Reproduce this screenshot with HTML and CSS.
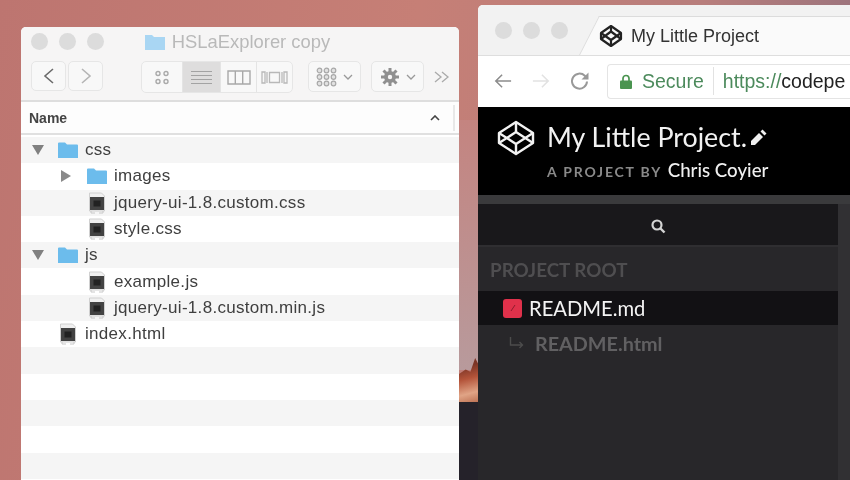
FILE: index.html
```html
<!doctype html>
<html>
<head>
    <meta charset="utf-8">
    <title>HSLaExplorer copy</title>
    <link rel="stylesheet" href="styles.css">
</head>

<body>
<svg class="defs" width="0" height="0">
    <symbol id="folder" viewBox="0 0 22 17"><path d="M1 1.500q0-1 1-1h6l2 2h10q1 0 1 1V16H1z" fill="#6cbcec"/></symbol>
    <symbol id="doc" viewBox="0 0 18 22">
        <path d="M1.500 1h12l3 3v15h-15z" fill="#f0f0f0" stroke="#d0d0d0"/>
        <rect x="2" y="5" width="14" height="13" fill="#434343"/>
        <rect x="5.500" y="8.500" width="7" height="6" fill="#222"/>
        <path d="M3 19v2h4M15 19v2h-4" fill="none" stroke="#c8c8c8"/>
    </symbol>
    <symbol id="open" viewBox="0 0 12 10"><path d="M0 0h12L6 10z" fill="#808080"/></symbol>
    <symbol id="closed" viewBox="0 0 10 12"><path d="M0 0v12l10-6z" fill="#8a8a8a"/></symbol>
    <symbol id="chevron" viewBox="0 0 10 6"><path d="M1 1l4 4 4-4" fill="none" stroke="#999" stroke-width="1.300"/></symbol>
</svg>

<div class="desktop">
    <div class="strip"></div>
    <div class="rock"></div>
    <div class="rock-base"></div>

    <div class="finder">
        <div class="finder-title">
            <div class="lights"><i></i><i></i><i></i></div>
            <svg class="title-folder" width="20" height="17" viewBox="0 0 20 17"><path d="M0 1h7l2 2h11v13H0z" fill="#a9d6f3"/></svg>
            <span>HSLaExplorer copy</span>
        </div>
        <div class="finder-tools">
            <div class="btn-group nav">
                <div class="tool tool-nav"><svg width="14" height="18" viewBox="0 0 14 18"><path d="M11 2L3 9l8 7" fill="none" stroke="#6b6b6b" stroke-width="1.600"/></svg></div>
                <div class="tool tool-nav"><svg width="14" height="18" viewBox="0 0 14 18"><path d="M3 2l8 7-8 7" fill="none" stroke="#b5b5b5" stroke-width="1.600"/></svg></div>
            </div>
            <div class="btn-group views">
                <div class="tool tool-view icons"><svg width="16" height="15" viewBox="0 0 16 15"><g fill="none" stroke="#aaa" stroke-width="1.400"><circle cx="4" cy="3.500" r="2"/><circle cx="12" cy="3.500" r="2"/><circle cx="4" cy="11.500" r="2"/><circle cx="12" cy="11.500" r="2"/></g></svg></div>
                <div class="tool tool-view active"><svg width="21" height="15" viewBox="0 0 21 15"><path d="M0 1.500h21M0 5.500h21M0 9.500h21M0 13.500h21" stroke="#a3a3a3" stroke-width="1.200"/></svg></div>
                <div class="tool tool-view"><svg width="24" height="15" viewBox="0 0 24 15"><path d="M1 1h22v13H1zM8.300 1v13M15.700 1v13" fill="none" stroke="#a8a8a8" stroke-width="1.400"/></svg></div>
                <div class="tool tool-view"><svg width="27" height="15" viewBox="0 0 27 15"><path d="M8.500 2.500h10v10h-10zM1 2h3v11H1zM6 2v11M21 2v11M23 2h3v11h-3z" fill="none" stroke="#b8b8b8" stroke-width="1.300"/></svg></div>
            </div>
            <div class="tool tool-menu arrange">
                <svg width="21" height="20" viewBox="0 0 21 20"><g fill="#e2e2e2" stroke="#a8a8a8" stroke-width="1.200"><circle cx="3.500" cy="3.500" r="2.300"/><circle cx="10.500" cy="3.500" r="2.300"/><circle cx="17.500" cy="3.500" r="2.300"/><circle cx="3.500" cy="10" r="2.300"/><circle cx="10.500" cy="10" r="2.300"/><circle cx="17.500" cy="10" r="2.300"/><circle cx="3.500" cy="16.500" r="2.300"/><circle cx="10.500" cy="16.500" r="2.300"/><circle cx="17.500" cy="16.500" r="2.300"/></g></svg>
                <svg width="10" height="6"><use href="#chevron"/></svg>
            </div>
            <div class="tool tool-menu action">
                <svg width="20" height="20" viewBox="0 0 20 20"><path d="M10 1v18M1 10h18M3.500 3.500l13 13M16.500 3.500l-13 13" stroke="#8f8f8f" stroke-width="3"/><circle cx="10" cy="10" r="6" fill="#8f8f8f"/><circle cx="10" cy="10" r="2.200" fill="#f6f5f5"/></svg>
                <svg width="10" height="6"><use href="#chevron"/></svg>
            </div>
            <svg class="more" width="16" height="12" viewBox="0 0 16 12"><path d="M1 1l6 5-6 5M8 1l6 5-6 5" fill="none" stroke="#aaa" stroke-width="1.300"/></svg>
        </div>
        <div class="finder-head">
            <span>Name</span>
            <svg class="sort" width="10" height="6" viewBox="0 0 10 6"><path d="M1 5l4-4 4 4" fill="none" stroke="#444" stroke-width="1.600"/></svg>
            <i class="head-divider"></i>
        </div>
        <div class="finder-list">
            <div class="row even">
                <svg class="disc" width="12" height="10"><use href="#open"/></svg>
                <svg class="folder" width="22" height="17"><use href="#folder"/></svg>
                <span>css</span>
            </div>
            <div class="row depth1">
                <svg class="disc" width="10" height="12"><use href="#closed"/></svg>
                <svg class="folder" width="22" height="17"><use href="#folder"/></svg>
                <span>images</span>
            </div>
            <div class="row even depth1 file">
                <svg class="doc" width="18" height="22"><use href="#doc"/></svg>
                <span>jquery-ui-1.8.custom.css</span>
            </div>
            <div class="row depth1 file">
                <svg class="doc" width="18" height="22"><use href="#doc"/></svg>
                <span>style.css</span>
            </div>
            <div class="row even">
                <svg class="disc" width="12" height="10"><use href="#open"/></svg>
                <svg class="folder" width="22" height="17"><use href="#folder"/></svg>
                <span>js</span>
            </div>
            <div class="row depth1 file">
                <svg class="doc" width="18" height="22"><use href="#doc"/></svg>
                <span>example.js</span>
            </div>
            <div class="row even depth1 file">
                <svg class="doc" width="18" height="22"><use href="#doc"/></svg>
                <span>jquery-ui-1.8.custom.min.js</span>
            </div>
            <div class="row file top-file">
                <svg class="doc" width="18" height="22"><use href="#doc"/></svg>
                <span>index.html</span>
            </div>
            <div class="row even"></div>
            <div class="row"></div>
            <div class="row even"></div>
            <div class="row"></div>
            <div class="row even"></div>
        </div>
    </div>

    <div class="browser">
        <div class="tabbar">
            <div class="lights"><i></i><i></i><i></i></div>
            <div class="tab">
                <svg width="24" height="24" viewBox="0 0 24 24"><g fill="none" stroke="#222" stroke-width="2.200" stroke-linejoin="round"><path d="M12 2l10 7v6l-10 7-10-7V9z"/><path d="M12 2v5.500M12 16.500V22M2 9l10 7 10-7M2 15l10-7.500L22 15"/></g></svg>
                <span>My Little Project</span>
            </div>
        </div>
        <div class="addressbar">
            <svg width="18" height="18" viewBox="0 0 20 18"><path d="M19 9H2M9 2L2 9l7 7" fill="none" stroke="#8c8c8c" stroke-width="1.700"/></svg>
            <svg width="18" height="18" viewBox="0 0 20 18"><path d="M1 9h17M11 2l7 7-7 7" fill="none" stroke="#e2e2e2" stroke-width="1.700"/></svg>
            <svg width="20" height="20" viewBox="0 0 20 20"><path d="M17 10.500a7.500 7.500 0 1 1-2.200-5.700L17.500 7.500" fill="none" stroke="#999" stroke-width="2"/><path d="M18.500 1.500v7h-7z" fill="#999"/></svg>
            <div class="omnibox">
                <svg width="12" height="15" viewBox="0 0 12 15"><path d="M3 7V4.500a3 3 0 0 1 6 0V7" fill="none" stroke="#4a9450" stroke-width="1.700"/><rect y="6.500" width="12" height="8.500" rx="1" fill="#4a9450"/></svg>
                <span class="secure">Secure</span>
                <span class="url"><em>https://</em>codepe</span>
            </div>
        </div>
        <div class="project-head">
            <svg class="cp-logo" width="38" height="36" viewBox="0 0 38 36"><g fill="none" stroke="#f2f2f2" stroke-width="2.400" stroke-linejoin="round"><path d="M19 2l17 11v10L19 34 2 23V13z"/><path d="M19 2v10M19 24v10M2 13l17 11 17-11M2 23l17-11 17 11"/></g></svg>
            <div class="project-text">
                <div class="project-name">My Little Project.<svg width="18" height="18" viewBox="0 0 18 18"><path d="M1 13l8-8 4 4-8 8H1zM10.500 3.500l2-2 4 4-2 2z" fill="#f0f0f0"/></svg></div>
                <div class="project-by"><span>A PROJECT BY</span> <b>Chris Coyier</b></div>
            </div>
        </div>
        <div class="editor">
            <div class="sidebar">
                <div class="search"><svg width="16" height="16" viewBox="0 0 16 16"><circle cx="7" cy="7" r="4.500" fill="none" stroke="#d4d4d4" stroke-width="2.200"/><path d="M10.500 10.500l4 4" stroke="#d4d4d4" stroke-width="2.400"/></svg></div>
                <div class="root-label">PROJECT ROOT</div>
                <div class="file-row active">
                    <svg width="19" height="19" viewBox="0 0 19 19"><rect width="19" height="19" rx="3" fill="#e0314b"/><path d="M8 12l4-6" stroke="#8e1c2d" stroke-width="1"/></svg>
                    <span>README.md</span>
                </div>
                <div class="file-row child">
                    <svg width="16" height="14" viewBox="0 0 16 14"><path d="M1.500 1v8h12M10.500 6l3 3-3 3" fill="none" stroke="#4c4c4c" stroke-width="1.400"/></svg>
                    <span>README.html</span>
                </div>
            </div>
            <div class="gutter"></div>
        </div>
    </div>
</div>
</body>

</html>
```

FILE: styles.css
```css
html, body {margin: 0; padding: 0; height: 100%; overflow: hidden;}
body {font-family: "Liberation Sans", Arial, sans-serif; color: #3c3c3c;}
svg {display: block; flex: none;}
.defs {position: absolute;}

.desktop {position: relative; width: 850px; height: 480px; overflow: hidden; filter: blur(.4px); background: linear-gradient(100deg, #bd7570 0%, #c67f76 45%, #b87e7c 75%, #8f6f7d 100%);}
.strip {position: absolute; left: 459px; top: 120px; width: 19px; height: 250px; background: linear-gradient(180deg, #c48480, #b89a9c);}
.rock {position: absolute; left: 459px; top: 358px; width: 19px; height: 46px; background: linear-gradient(165deg, #7c3526 20%, #b4543a 45%, #e0a486 75%, #b86a4c); clip-path: polygon(0 35%, 35% 25%, 60% 30%, 85% 0, 100% 12%, 100% 100%, 0 100%);}
.rock-base {position: absolute; left: 459px; top: 402px; width: 19px; height: 78px; background: #25222a;}

.finder {position: absolute; left: 21px; top: 27px; width: 438px; height: 453px; background: #fff; border-radius: 5px 5px 0 0; display: flex; flex-direction: column; overflow: hidden;}
.finder-title {height: 32px; display: flex; align-items: center; justify-content: center; gap: 7px; color: #b9b9b9; font-size: 18.400px; background: #f6f5f5; position: relative; padding: 0 5px 2px 0; box-sizing: border-box; flex: none;}
.finder-title .lights {position: absolute; left: 10px; top: 6px;}
.lights {display: flex; gap: 11px;}
.lights i {display: block; width: 17px; height: 17px; border-radius: 50%; background: #dcdcdc;}

.finder-tools {height: 43px; flex: none; display: flex; align-items: flex-start; background: #f6f5f5; border-bottom: 2px solid #dedede; padding-top: 2px; box-sizing: border-box;}
.btn-group {display: flex; border: 1px solid #e6e6e6; border-radius: 5px; background: #f8f8f8; height: 29px;}
.tool {display: flex; align-items: center; justify-content: center; box-sizing: border-box;}
.nav {margin-left: 10px; border: 0; gap: 2px; background: none; height: 30px;}
.tool-nav {width: 35px; border: 1px solid #e6e6e6; border-radius: 5px; background: #f8f8f8;}
.views {margin-left: 38px; height: 30px;}
.tool-view {width: 36px;}
.tool-view.icons {width: 40px;}
.tool-view.active {width: 38px; background: #dedddd;}
.tool-view + .tool-view {border-left: 1px solid #e4e4e4;}
.tool-menu {height: 31px; border: 1px solid #e6e6e6; border-radius: 5px; background: #f8f8f8; gap: 6px;}
.arrange {width: 53px; margin-left: 15px;}
.action {width: 53px; margin-left: 10px;}
.more {margin: 10px 0 0 10px;}

.finder-head {height: 33px; flex: none; display: flex; align-items: center; padding: 0 4px 0 8px; font-size: 14px; font-weight: bold; color: #444; background: #fdfdfd; border-bottom: 2px solid #e0e0e0; box-sizing: border-box;}
.sort {margin-left: auto;}
.head-divider {width: 2px; height: 26px; margin-left: 13px; background: #e8e8e8;}

.finder-list {flex: 1; padding-top: 2px;}
.row {height: 26.300px; display: flex; align-items: center; font-size: 17px; letter-spacing: .3px; color: #3f3f3f; background: #fff;}
.row.even {background: #f5f5f5;}
.disc {margin-left: 10px; width: 14px;}
.folder {margin-left: 12px;}
.row > .disc + .folder + span {margin-left: 6px;}
.depth1 .disc {margin-left: 39px; width: 12px;}
.depth1 .folder {margin-left: 14px;}
.file .doc {margin-left: 67px;}
.file span {margin-left: 8px;}
.top-file .doc {margin-left: 38px;}

.browser {position: absolute; left: 478px; top: 5px; width: 372px; height: 475px; border-radius: 5px 0 0 0; overflow: hidden; display: flex; flex-direction: column; background: #fff;}
.tabbar {height: 51px; flex: none; background: #f2f2f2; display: flex; align-items: flex-start; border-bottom: 1px solid #dedede; box-sizing: border-box;}
.tabbar .lights {padding: 17px 0 0 17px;}
.tab {position: relative; flex: none; width: 320px; height: 39px; margin: 11px 0 0 11px; padding: 1px 0 0 20px; display: flex; align-items: center; gap: 8px; font-size: 18px; color: #333; white-space: nowrap; box-sizing: border-box;}
.tab::before {content: ""; position: absolute; left: 0; top: 0; right: 0; bottom: 0; background: #fafafa; border-top: 1px solid #dcdcdc; border-left: 1px solid #dcdcdc; transform: skewX(-27deg); transform-origin: bottom left;}
.tab svg, .tab span {position: relative;}
.addressbar {height: 51px; flex: none; background: #fff; display: flex; align-items: center; gap: 20px; padding: 0 0 1px 16px; box-sizing: border-box;}
.omnibox {flex: none; width: 260px; height: 35px; margin-left: -3px; border: 1px solid #e4e4e4; border-right: 0; border-radius: 4px 0 0 4px; display: flex; align-items: center; box-sizing: border-box; padding-left: 12px; font-size: 19.500px; white-space: nowrap;}
.secure {margin-left: 10px; padding-right: 9px; color: #4c8a5c; border-right: 1px solid #e2e2e2; line-height: 28px;}
.url {margin-left: 9px; color: #222;}
.url em {font-style: normal; color: #4c8a5c;}

.project-head {height: 88px; flex: none; background: #000; display: flex; padding: 13px 0 0 19px; box-sizing: border-box; gap: 12px; color: #f2f2f2;}
.project-text {padding-top: 1px; font-family: Lato, "Liberation Sans", sans-serif;}
.project-name {display: flex; align-items: center; gap: 3px; font-size: 26.800px; line-height: 32px; color: #f2f2f2;}
.project-by {margin-top: 7px; font-size: 14px; line-height: 20px;}
.project-by span {color: #8a8a8a; letter-spacing: 1.800px; font-weight: bold;}
.project-by b {color: #f0f0f0; font-weight: 500; font-size: 18.700px; margin-left: 2px;}

.editor {flex: 1; display: flex; background: #28272a; border-top: 9px solid #3a3a3c;}
.sidebar {width: 360px; flex: none;}
.search {height: 41px; padding-top: 3px; box-sizing: content-box; height: 38px; background: #19181b; display: flex; align-items: center; justify-content: center; border-bottom: 2px solid #2f2e31;}
.root-label {height: 44px; padding-left: 12px; font-family: Lato, "Liberation Sans", sans-serif; font-size: 18.800px; font-weight: bold; color: #4f4e50; line-height: 46px; box-sizing: border-box;}
.file-row {height: 34px; display: flex; align-items: center; font-family: Lato, "Liberation Sans", sans-serif;}
.file-row.active {background: #121114; color: #f4f4f4; padding-left: 25px; gap: 7px; font-size: 20.200px;}
.file-row.child {height: 36px; color: #616062; padding-left: 31px; gap: 10px; font-size: 19.800px; font-weight: bold;}
.gutter {flex: none; width: 12px; background: #313033;}
```
